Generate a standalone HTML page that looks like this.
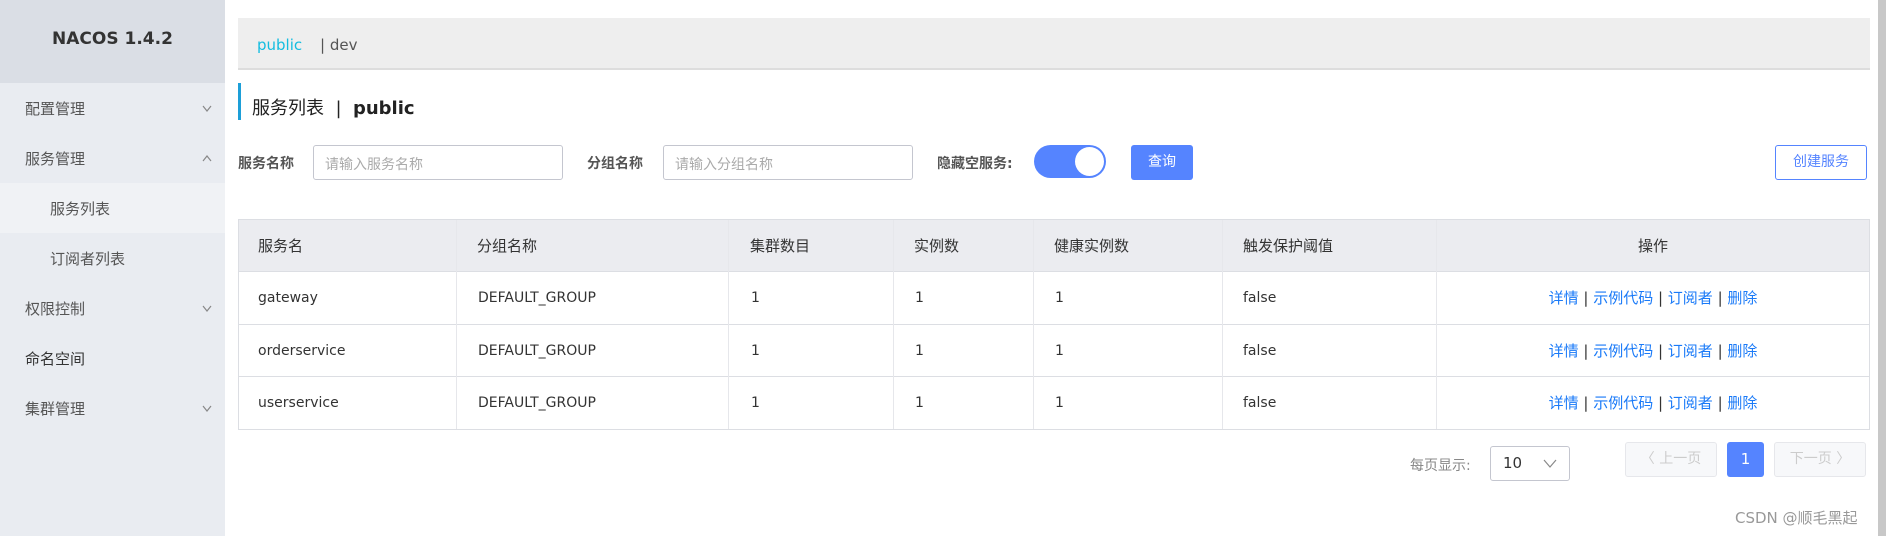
<!DOCTYPE html>
<html><head><meta charset="utf-8"><style>
*{box-sizing:border-box;margin:0;padding:0}
body{width:1886px;height:536px;overflow:hidden;background:#fff;font-family:"DejaVu Sans","Noto Sans CJK SC",sans-serif;position:relative;color:#333}
.a{position:absolute}
.side{left:0;top:0;width:225px;height:536px;background:#e9ecf1}
.logo{left:0;top:0;width:225px;height:83px;background:#dadee5;font-weight:bold;font-size:17px;color:#333;text-align:center;line-height:78px}
.mi{left:25px;font-size:15px;color:#555}
.cell{position:absolute;font-size:14px;color:#333}
.hd{font-size:15px;top:235px}
.lk{color:#1a7af8}
.op{left:1436px;width:434px;text-align:center;font-size:15px}
</style></head><body>
<div class="a side"></div>
<div class="a logo">NACOS 1.4.2</div>
<div class="a mi" style="top:98px">配置管理</div>
<svg class="a" style="left:202px;top:105px" width="10" height="8"><path d="M1 1L5 6L9 1" fill="none" stroke="#888" stroke-width="1.2"/></svg>
<div class="a mi" style="top:148px">服务管理</div>
<svg class="a" style="left:202px;top:154px" width="10" height="8"><path d="M1 7L5 2L9 7" fill="none" stroke="#888" stroke-width="1.2"/></svg>
<div class="a" style="left:0;top:183px;width:225px;height:50px;background:#f0f2f5"></div>
<div class="a mi" style="left:50px;top:198px">服务列表</div>
<div class="a mi" style="left:50px;top:248px">订阅者列表</div>
<div class="a mi" style="top:298px">权限控制</div>
<svg class="a" style="left:202px;top:305px" width="10" height="8"><path d="M1 1L5 6L9 1" fill="none" stroke="#888" stroke-width="1.2"/></svg>
<div class="a mi" style="top:348px;color:#333">命名空间</div>
<div class="a mi" style="top:398px">集群管理</div>
<svg class="a" style="left:202px;top:405px" width="10" height="8"><path d="M1 1L5 6L9 1" fill="none" stroke="#888" stroke-width="1.2"/></svg>
<div class="a" style="left:1878px;top:0;width:8px;height:536px;background:#c8c8c8"></div>

<div class="a" style="left:238px;top:18px;width:1632px;height:52px;background:#eee;border-bottom:2px solid #ddd"></div>
<div class="a" style="left:257px;top:36px;font-size:15px;color:#15bde0">public</div>
<div class="a" style="left:320px;top:36px;font-size:15px;color:#555">| dev</div>

<div class="a" style="left:238px;top:83px;width:3px;height:37px;background:#1d9fd8"></div>
<div class="a" style="left:252px;top:94px;font-size:18px;color:#222">服务列表 &nbsp;|&nbsp; <span style="font-weight:bold">public</span></div>

<div class="a" style="left:238px;top:153px;font-size:14px;font-weight:bold;color:#555">服务名称</div>
<div class="a" style="left:313px;top:145px;width:250px;height:35px;border:1px solid #c4c6cf;border-radius:3px;font-size:14px;color:#aaa;padding:8px 11px">请输入服务名称</div>
<div class="a" style="left:587px;top:153px;font-size:14px;font-weight:bold;color:#555">分组名称</div>
<div class="a" style="left:663px;top:145px;width:250px;height:35px;border:1px solid #c4c6cf;border-radius:3px;font-size:14px;color:#aaa;padding:8px 11px">请输入分组名称</div>
<div class="a" style="left:937px;top:153px;font-size:14px;font-weight:bold;color:#555">隐藏空服务:</div>
<div class="a" style="left:1034px;top:145px;width:72px;height:33px;border-radius:17px;background:#5584ff"></div>
<div class="a" style="left:1075px;top:147px;width:29px;height:29px;border-radius:50%;background:#fff"></div>
<div class="a" style="left:1131px;top:145px;width:62px;height:35px;border-radius:3px;background:#5584ff;color:#fff;font-size:14px;text-align:center;line-height:35px">查询</div>
<div class="a" style="left:1775px;top:145px;width:92px;height:35px;border-radius:3px;border:1px solid #5584ff;color:#5584ff;font-size:14px;text-align:center;line-height:33px">创建服务</div>

<div class="a" style="left:238px;top:219px;width:1632px;height:211px;border:1px solid #dcdee3"></div>
<div class="a" style="left:239px;top:220px;width:1630px;height:52px;background:#ebecf0;border-bottom:1px solid #dcdee3"></div>
<div class="a" style="left:239px;top:324px;width:1630px;height:1px;background:#dcdee3"></div>
<div class="a" style="left:239px;top:376px;width:1630px;height:1px;background:#dcdee3"></div>
<div class="a" style="left:456px;top:220px;width:1px;height:209px;background:#e6e7eb"></div>
<div class="a" style="left:728px;top:220px;width:1px;height:209px;background:#e6e7eb"></div>
<div class="a" style="left:893px;top:220px;width:1px;height:209px;background:#e6e7eb"></div>
<div class="a" style="left:1033px;top:220px;width:1px;height:209px;background:#e6e7eb"></div>
<div class="a" style="left:1222px;top:220px;width:1px;height:209px;background:#e6e7eb"></div>
<div class="a" style="left:1436px;top:220px;width:1px;height:209px;background:#e6e7eb"></div>

<div class="cell hd" style="left:258px">服务名</div>
<div class="cell hd" style="left:477px">分组名称</div>
<div class="cell hd" style="left:750px">集群数目</div>
<div class="cell hd" style="left:914px">实例数</div>
<div class="cell hd" style="left:1054px">健康实例数</div>
<div class="cell hd" style="left:1243px">触发保护阈值</div>
<div class="cell hd op">操作</div>

<div class="cell" style="left:258px;top:290px">gateway</div>
<div class="cell" style="left:478px;top:290px">DEFAULT_GROUP</div>
<div class="cell" style="left:751px;top:290px">1</div>
<div class="cell" style="left:915px;top:290px">1</div>
<div class="cell" style="left:1055px;top:290px">1</div>
<div class="cell" style="left:1243px;top:290px">false</div>
<div class="cell op" style="top:287px"><span class="lk">详情</span> | <span class="lk">示例代码</span> | <span class="lk">订阅者</span> | <span class="lk">删除</span></div>

<div class="cell" style="left:258px;top:343px">orderservice</div>
<div class="cell" style="left:478px;top:343px">DEFAULT_GROUP</div>
<div class="cell" style="left:751px;top:343px">1</div>
<div class="cell" style="left:915px;top:343px">1</div>
<div class="cell" style="left:1055px;top:343px">1</div>
<div class="cell" style="left:1243px;top:343px">false</div>
<div class="cell op" style="top:340px"><span class="lk">详情</span> | <span class="lk">示例代码</span> | <span class="lk">订阅者</span> | <span class="lk">删除</span></div>

<div class="cell" style="left:258px;top:395px">userservice</div>
<div class="cell" style="left:478px;top:395px">DEFAULT_GROUP</div>
<div class="cell" style="left:751px;top:395px">1</div>
<div class="cell" style="left:915px;top:395px">1</div>
<div class="cell" style="left:1055px;top:395px">1</div>
<div class="cell" style="left:1243px;top:395px">false</div>
<div class="cell op" style="top:392px"><span class="lk">详情</span> | <span class="lk">示例代码</span> | <span class="lk">订阅者</span> | <span class="lk">删除</span></div>

<div class="a" style="left:1410px;top:455px;font-size:14px;color:#888">每页显示:</div>
<div class="a" style="left:1490px;top:446px;width:80px;height:35px;border:1px solid #c4c6cf;border-radius:3px;font-size:15px;color:#333;padding:7px 12px">10</div>
<svg class="a" style="left:1543px;top:459px" width="14" height="10"><path d="M1 1L7 8L13 1" fill="none" stroke="#888" stroke-width="1.2"/></svg>
<div class="a" style="left:1625px;top:442px;width:92px;height:35px;border:1px solid #e6e7eb;border-radius:3px;background:#f7f8fa;color:#ccc;font-size:14px;text-align:center;line-height:33px">〈 上一页</div>
<div class="a" style="left:1727px;top:442px;width:37px;height:35px;border-radius:3px;background:#5584ff;color:#fff;font-size:15px;text-align:center;line-height:35px">1</div>
<div class="a" style="left:1774px;top:442px;width:92px;height:35px;border:1px solid #e6e7eb;border-radius:3px;background:#f7f8fa;color:#ccc;font-size:14px;text-align:center;line-height:33px">下一页 〉</div>
<div class="a" style="left:1735px;top:507px;font-size:15px;color:#999">CSDN @顺毛黑起</div>
</body></html>
